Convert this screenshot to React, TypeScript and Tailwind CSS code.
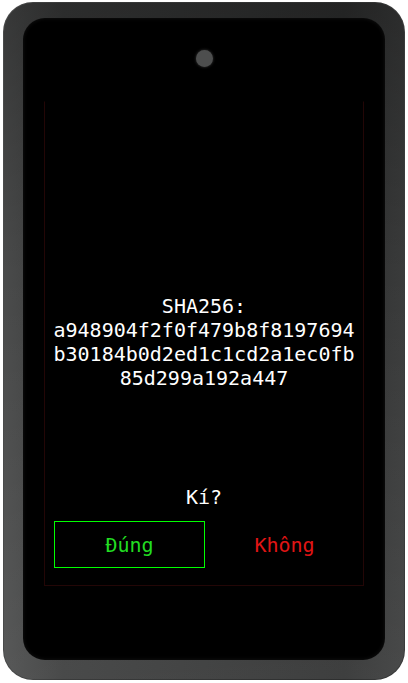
import React from "react";

export default function App() {
  const mono = { fontFamily: '"DejaVu Sans Mono", "Liberation Mono", monospace' };
  return (
    <div className="w-[408px] h-[683px] bg-white pl-[3px] pt-[2px]">
      <div className="w-[402px] h-[678px] rounded-[30px] bg-[linear-gradient(90deg,#4a4b4b_0%,#3a3b3b_15%,#2e2f2f_85%,#3a3b3b_100%)] p-[1px]">
        <div className="w-full h-full rounded-[29px] bg-[linear-gradient(180deg,rgba(0,0,0,0.25)_0%,rgba(0,0,0,0)_40%,rgba(255,255,255,0.08)_100%)] pl-[19px] pr-[19px] pt-[15px] pb-[19px]">
          <div className="w-full h-full rounded-[22px] bg-black flex flex-col items-center pt-[32px] shadow-[inset_0_0_4px_rgba(255,255,255,0.08)]">
            <div className="w-[17px] h-[17px] rounded-full bg-[#4d4e4e] shadow-[0_0_3px_rgba(120,120,120,0.5)]" />
            <div
              className="mt-[34px] w-[320px] h-[485px] border border-[#230606] border-t-transparent flex flex-col items-center pt-[192px] text-white text-[20px] leading-[24px]"
              style={mono}
            >
              <div className="text-center">SHA256:</div>
              <div className="text-center">a948904f2f0f479b8f8197694</div>
              <div className="text-center">b30184b0d2ed1c1cd2a1ec0fb</div>
              <div className="text-center">85d299a192a447</div>
              <div className="mt-[95px] text-center">Kí?</div>
              <div className="mt-[12px] w-full pl-[9px] pr-[3px] grid grid-cols-2 gap-[4px]">
                <div className="h-[47px] border-[1.5px] border-[#00ff00] flex items-center justify-center text-[#22dd22]">
                  Đúng
                </div>
                <div className="h-[47px] flex items-center justify-center text-[#e01515]">
                  Không
                </div>
              </div>
            </div>
          </div>
        </div>
      </div>
    </div>
  );
}
